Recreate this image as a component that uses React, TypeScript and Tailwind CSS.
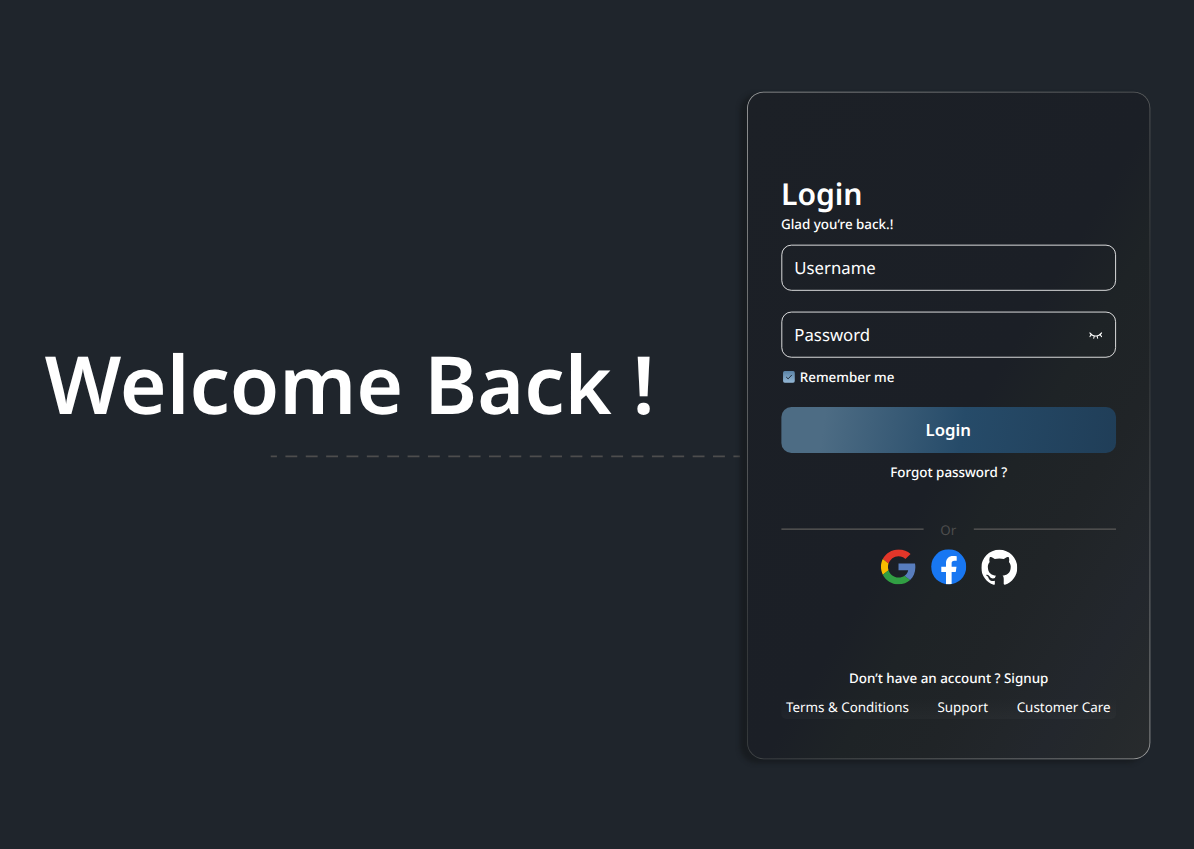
import React from "react";
import { SiGithub } from "react-icons/si";

function GoogleLogo() {
  return (
    <svg viewBox="2 2 44 44" className="size-[42px]" aria-hidden="true">
      <path fill="#e33629" d="M24 10.700c3.600 0 6.400 1.400 8.600 3.400l6.500-6.300C35.200 4.300 30.200 2.200 24 2.200c-8.600 0-16 4.900-19.700 12.100l7.300 5.700c1.800-5.400 6.600-9.300 12.400-9.300z" />
      <path fill="#f8bd00" d="M11.500 28.300c-.5-1.400-.7-2.800-.7-4.300s.3-3 .7-4.200l-7.200-5.600C2.900 17.100 2 20.500 2 24s.9 6.900 2.400 9.900l7.100-5.600z" />
      <path fill="#319f43" d="M24 45.900c5.900 0 10.900-1.900 14.500-5.300l-6.900-5.400c-1.900 1.300-4.400 2.200-7.600 2.200-5.800 0-10.700-3.800-12.500-9.100l-7.200 5.600C8 41 15.400 45.900 24 45.900z" />
      <path fill="#587dbd" d="M45.100 24.500c0-1.800-.1-3.100-.5-4.500H24v8.200h12.100c-.2 2-1.600 5.100-4.500 7.100l6.900 5.300c4.200-3.800 6.600-9.500 6.600-16.100z" />
    </svg>
  );
}

function FacebookLogo() {
  return (
    <svg viewBox="0 0 36 36" className="size-[42px]" aria-hidden="true">
      <circle cx="18" cy="18" r="18" fill="#1877f2" />
      <path
        fill="#fff"
        d="M15.200 35.800V23.200h-4.800v-5.300h4.800v-3.200c0-5 2.900-7.700 7.300-7.700 1.300 0 2.500.1 3.700.3v4.500h-2.300c-2.200 0-2.900 1.200-2.900 2.700v3.400h5l-.8 5.300H21v12.400c-2 .4-4 .5-5.800.2z"
      />
    </svg>
  );
}

function ClosedEye() {
  return (
    <svg viewBox="0 0 16 16" className="size-[16px]" fill="none" stroke="#fff" strokeWidth="1.250" strokeLinecap="round" aria-hidden="true">
      <path d="M.6 5.400C4 10.200 11.400 10.200 14.800 5.400M2.500 7.300.7 9.900M6 8.900l-.6 2.900M9.400 8.900l.6 2.900M12.900 7.300l1.800 2.600" />
    </svg>
  );
}

function Field({ label, icon }: { label: string; icon?: React.ReactNode }) {
  return (
    <div className="flex h-[55px] items-center justify-between rounded-xl border border-white pr-[15px] pl-[14.500px]">
      <span className="text-xl leading-[27px]">{label}</span>
      {icon}
    </div>
  );
}

export default function App() {
  return (
    <main className="h-[849px] w-[1194px] overflow-hidden bg-[#1f252c]">
      <div className="flex h-[1016px] w-[1428px] origin-top-left [transform:translateY(-0.4px)_scale(0.8366)] font-['Noto_Sans',sans-serif] text-white [text-rendering:geometricPrecision]">
        <section className="flex w-[893px] shrink-0 flex-col pt-[393px]">
          <h1 className="pl-[53.500px] text-8xl leading-[131px] font-semibold whitespace-nowrap">Welcome Back !</h1>
          <svg className="mt-[20px] ml-[323px] h-[4px] w-[562px]" aria-hidden="true">
            <line x1="0.500" y1="2" x2="561.500" y2="2" stroke="#4d4d4d" strokeWidth="2" strokeDasharray="14.200 10.140" strokeDashoffset="6.700" />
          </svg>
        </section>

        <section className="mt-[110px] h-[798px] w-[482px] shrink-0 rounded-[20px] bg-[linear-gradient(137deg,#a5a6a6,#3a3d3f_52%,#34383a_60%,#a0a1a1)] p-px shadow-[-8px_4px_5px_rgba(23,26,30,0.8)]">
          <div className="flex h-full flex-col rounded-[19px] bg-[linear-gradient(121deg,#1c2026_0%,#1b1f26_52%,#1e2326_61%,#202427_72%,#22262a_80%,#23272d_86%,#25292c_93%,#282b2d_100%)] px-[40px] pt-[97px]">
            <h2 className="-ml-[0.500px] text-4xl leading-[49px] font-semibold">Login</h2>
            <p className="-ml-[0.500px] text-base leading-[22px] font-medium">Glad you’re back.!</p>
            <div className="mt-[14px] flex flex-col gap-[25px]">
              <Field label="Username" />
              <Field label="Password" icon={<ClosedEye />} />
            </div>
            <div className="mt-[11px] flex h-[24px] items-center gap-[6px] pl-[2px]">
              <span className="flex size-[14px] items-center justify-center rounded-[2px] bg-linear-to-b from-[#5a82a5] to-[#94b8d6]">
                <svg viewBox="0 0 12 12" className="size-[14px]" fill="none" stroke="#1b2733" strokeWidth="1" aria-hidden="true">
                  <path d="m3.200 6.100 2 1.900 3.800-4" />
                </svg>
              </span>
              <span className="text-base leading-[22px] font-medium">Remember me</span>
            </div>
            <button className="mt-[24px] h-[55px] shrink-0 rounded-xl bg-[linear-gradient(98deg,#4d6c84_0%,#4d6c84_13%,#264b69_54%,#203e58_100%)] pr-px text-xl leading-[27px] font-semibold">
              Login
            </button>
            <p className="mt-[12px] text-center text-base leading-[22px] font-medium">Forgot password ?</p>
            <div className="mt-[47px] flex h-[22px] items-start justify-between text-[#4d4d4d]">
              <span className="mt-[9px] h-[2px] w-[170px] bg-[#4d4d4d]" />
              <span className="pr-px text-base leading-[22px]">Or</span>
              <span className="mt-[9px] h-[2px] w-[170px] bg-[#4d4d4d]" />
            </div>
            <div className="mt-[12px] flex h-[42px] justify-center gap-[18px]">
              <GoogleLogo />
              <FacebookLogo />
              <SiGithub className="-mr-[0.500px] -ml-[0.500px] size-[43px]" />
            </div>
            <p className="mt-[101px] text-center text-base leading-[22px] font-medium">Don’t have an account ? Signup</p>
            <nav className="mt-[12px] flex h-[26px] items-start justify-between rounded-md bg-linear-to-b from-white/0 to-white/[0.025] pr-[6.500px] pl-[5.500px] text-base leading-[22px]">
              <span>Terms &amp; Conditions</span>
              <span>Support</span>
              <span>Customer Care</span>
            </nav>
          </div>
        </section>
      </div>
    </main>
  );
}
